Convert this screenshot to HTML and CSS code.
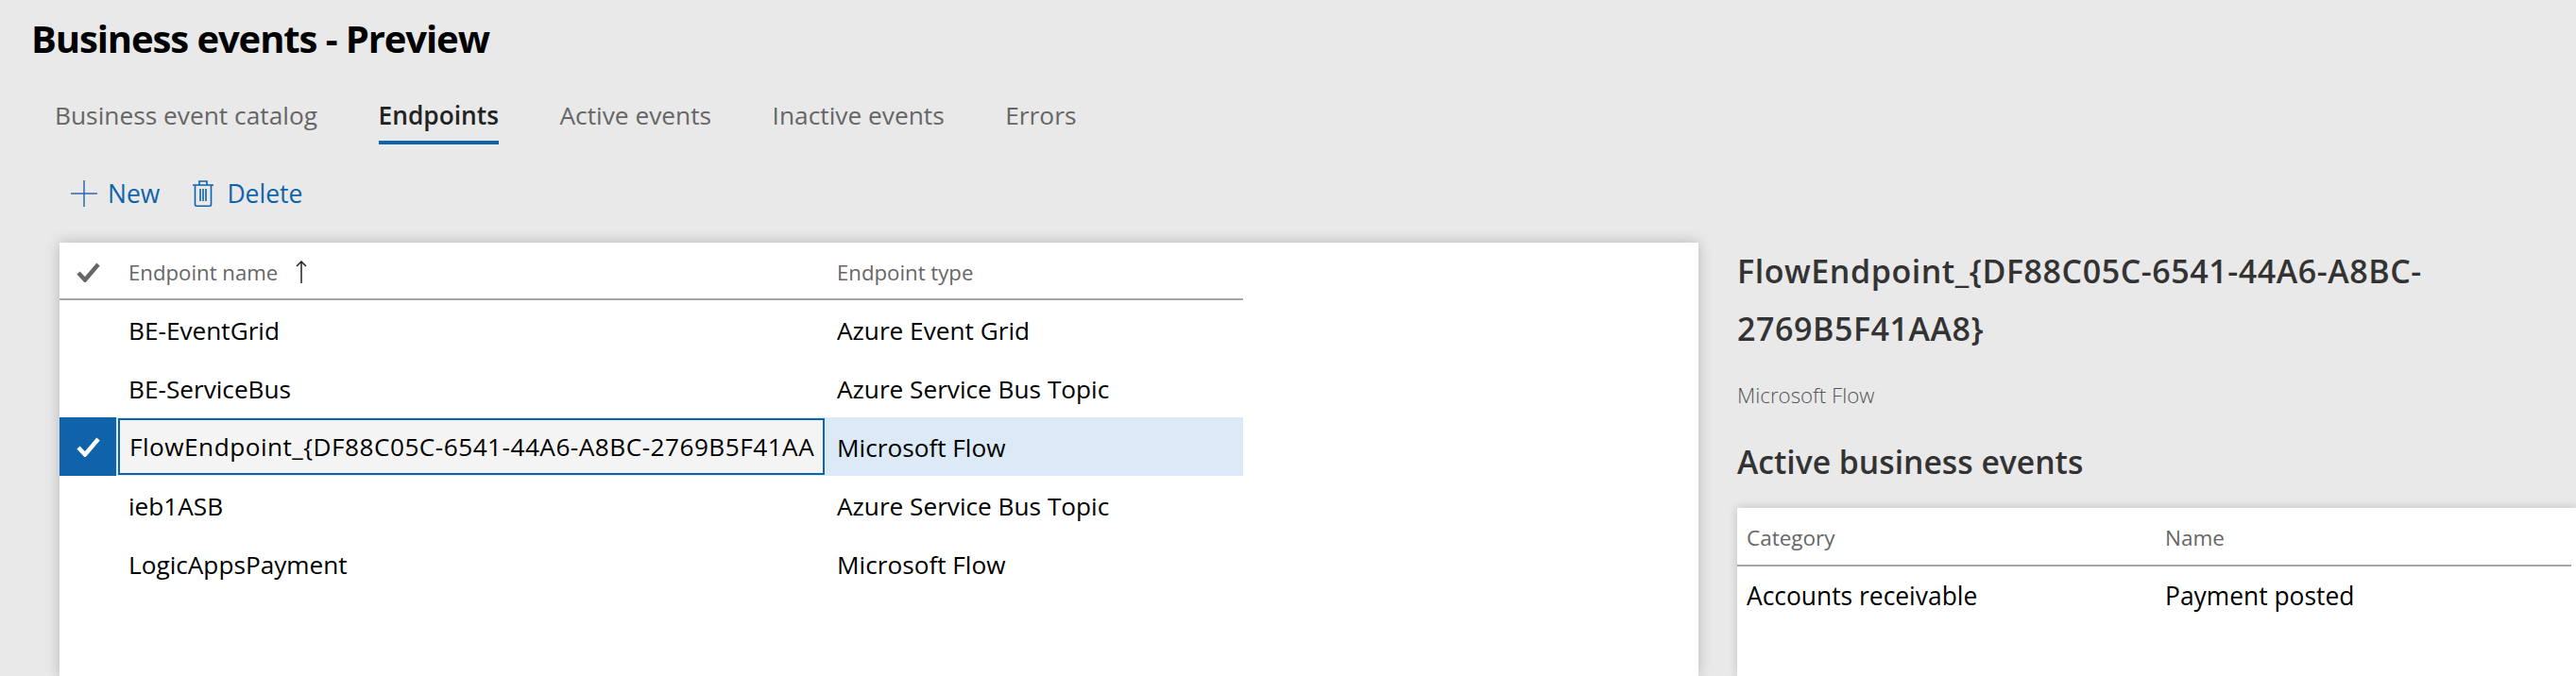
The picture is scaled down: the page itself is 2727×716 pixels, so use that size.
FILE: index.html
```html
<!DOCTYPE html>
<html lang="en">
<head>
    <meta charset="UTF-8">
    <title>Business events - Preview</title>
    <link rel="stylesheet" href="styles.css">
</head>
<body>
    <h1 class="page-title">Business events - Preview</h1>

    <nav class="tabs">
        <a class="tab tab-catalog">Business event catalog</a>
        <a class="tab tab-active">Endpoints</a>
        <a class="tab">Active events</a>
        <a class="tab">Inactive events</a>
        <a class="tab">Errors</a>
    </nav>

    <div class="toolbar">
        <button class="tool tool-new">
            <svg width="28" height="28" viewBox="0 0 28 28"><path d="M14 0V28M0 14H28" fill="none" stroke="#2f69a8" stroke-width="1.5"/></svg>
            New
        </button>
        <button class="tool tool-delete">
            <svg width="22" height="28" viewBox="0 0 22 28"><path d="M0 5H22M7 5V1H15V5M2.5 5V25.5Q2.5 27.2 4.2 27.2H17.8Q19.5 27.2 19.5 25.5V5M8 9V22M11 9V22M14 9V22" fill="none" stroke="#0f63ab" stroke-width="1.6"/></svg>
            Delete
        </button>
    </div>

    <main class="content">
        <section class="list-card">
            <div class="grid-head">
                <div class="check-cell">
                    <svg width="25" height="21" viewBox="0 0 25 21"><path d="M2 11L9 18.5L23 2" fill="none" stroke="#666" stroke-width="4.5"/></svg>
                </div>
                <div class="col-name">Endpoint name
                    <svg class="sort-arrow" width="12" height="24" viewBox="0 0 12 24"><path d="M6 24V1M1 6L6 1L11 6" fill="none" stroke="#222" stroke-width="1.5"/></svg>
                </div>
                <div class="col-type">Endpoint type</div>
            </div>
            <div class="grid-row">
                <div class="check-cell"></div>
                <div class="col-name">BE-EventGrid</div>
                <div class="col-type">Azure Event Grid</div>
            </div>
            <div class="grid-row">
                <div class="check-cell"></div>
                <div class="col-name">BE-ServiceBus</div>
                <div class="col-type">Azure Service Bus Topic</div>
            </div>
            <div class="grid-row row-selected">
                <div class="check-cell">
                    <svg width="25" height="21" viewBox="0 0 25 21"><path d="M2 11L9 18.5L23 2" fill="none" stroke="#fff" stroke-width="4.5"/></svg>
                </div>
                <div class="col-name name-edit">FlowEndpoint_{DF88C05C-6541-44A6-A8BC-2769B5F41AA</div>
                <div class="col-type">Microsoft Flow</div>
            </div>
            <div class="grid-row">
                <div class="check-cell"></div>
                <div class="col-name">ieb1ASB</div>
                <div class="col-type">Azure Service Bus Topic</div>
            </div>
            <div class="grid-row">
                <div class="check-cell"></div>
                <div class="col-name">LogicAppsPayment</div>
                <div class="col-type">Microsoft Flow</div>
            </div>
        </section>

        <aside class="detail">
            <h2 class="detail-title">FlowEndpoint_{DF88C05C-6541-44A6-A8BC-<br>2769B5F41AA8}</h2>
            <p class="detail-sub">Microsoft Flow</p>
            <h3 class="detail-heading">Active business events</h3>
            <div class="events-card">
                <div class="events-head">
                    <div class="col-category">Category</div>
                    <div>Name</div>
                </div>
                <div class="events-row">
                    <div class="col-category">Accounts receivable</div>
                    <div>Payment posted</div>
                </div>
            </div>
        </aside>
    </main>
</body>
</html>
```

FILE: styles.css
```css
html, body {
    height: 100%;
}
body {
    font-family: "Open Sans", Arial, sans-serif;
    background-color: #e9e9e9;
    color: #000;
    margin: 0;
    padding: 0;
    display: flex;
    flex-direction: column;
    overflow: hidden;
}

.page-title {
    margin: 0;
    padding: 16px 0 0 33px;
    font-size: 40px;
    line-height: 50px;
    font-weight: 700;
    letter-spacing: -1.1px;
}

/* tabs */
.tabs {
    display: flex;
    margin-top: 38px;
    padding-left: 58px;
    gap: 64.5px;
    height: 49px;
    font-size: 26.3px;
    line-height: 36px;
    color: #666;
}
.tab {
    display: block;
    height: 45px;
}
.tab-active {
    color: #222;
    font-weight: 600;
    border-bottom: 4px solid #0f63ab;
}

/* toolbar */
.toolbar {
    display: flex;
    gap: 35px;
    margin-top: 37px;
    padding-left: 75px;
    height: 30px;
}
.tool {
    display: flex;
    align-items: center;
    gap: 11px;
    border: 0;
    padding: 0;
    background: none;
    font: inherit;
    font-size: 26.5px;
    color: #0f63ab;
}
.tool-delete {
    gap: 14px;
}

/* main */
.content {
    flex: 1;
    display: flex;
    margin-top: 37px;
    min-height: 0;
}
.list-card {
    margin-left: 63px;
    width: 1735px;
    background-color: #fff;
    box-shadow: 0 0 14px rgba(0, 0, 0, 0.22);
    font-size: 26.2px;
}
.grid-head, .grid-row {
    display: flex;
    width: 1253px;
}
.grid-head {
    height: 55px;
    padding-top: 4px;
    align-items: center;
    border-bottom: 2px solid #a6a6a6;
    color: #666;
    font-size: 22.2px;
}
.grid-row {
    height: 62px;
    align-items: center;
}
.grid-row .col-name, .grid-row .col-type {
    padding-top: 2px;
}
.check-cell {
    width: 60px;
    height: 100%;
    display: flex;
    align-items: center;
    justify-content: center;
    flex: none;
}
.col-name {
    width: 750px;
    padding-left: 13px;
    box-sizing: border-box;
    flex: none;
    white-space: nowrap;
}
.col-type {
    padding-left: 13px;
}
.sort-arrow {
    margin-left: 13px;
    vertical-align: -3px;
}
.row-selected {
    background-color: #dce9f7;
}
.row-selected .check-cell {
    background-color: #0f63ab;
}
.grid-row .name-edit {
    width: 748px;
    height: 60px;
    margin-left: 2px;
    line-height: 56px;
    border: 2px solid #0f63ab;
    background-color: #f4f4f4;
    padding: 0 0 0 10px;
    overflow: hidden;
    letter-spacing: 0.48px;
}

/* detail panel */
.detail {
    flex: 1;
    display: flex;
    flex-direction: column;
    margin-left: 41px;
    color: #333;
    min-width: 0;
}
.detail-title {
    margin: 0;
    font-size: 34px;
    line-height: 61px;
    font-weight: 600;
    letter-spacing: 0.55px;
}
.detail-sub {
    margin: 24px 0 0 0;
    font-size: 22.3px;
    font-weight: 300;
    color: #555;
}
.detail-heading {
    margin: 32px 0 0 0;
    font-size: 33.7px;
    line-height: 46px;
    font-weight: 600;
}
.events-card {
    flex: 1;
    margin-top: 26px;
    background-color: #fff;
    box-shadow: 0 0 10px rgba(0, 0, 0, 0.18);
    padding-right: 5px;
    color: #000;
    font-size: 26.4px;
}
.events-head, .events-row {
    display: flex;
    padding-left: 10px;
}
.events-head {
    height: 58px;
    padding-top: 2px;
    align-items: center;
    border-bottom: 2px solid #a6a6a6;
    color: #666;
    font-size: 22.5px;
}
.events-row {
    height: 62px;
    align-items: center;
}
.col-category {
    width: 443px;
}
```
